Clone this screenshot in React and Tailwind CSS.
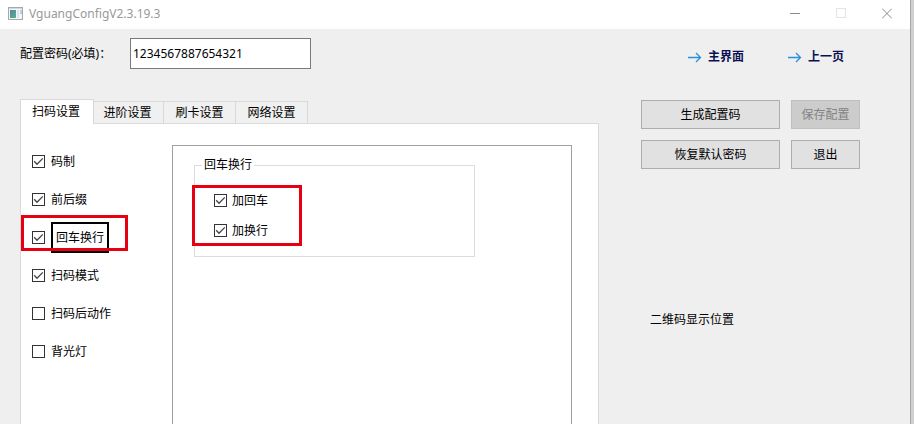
import React, { useState } from 'react';

const TABS = ['扫码设置', '进阶设置', '刷卡设置', '网络设置'];

const INITIAL_OPTIONS = [
  { id: 'symbology', label: '码制', checked: true },
  { id: 'affix', label: '前后缀', checked: true },
  { id: 'newline', label: '回车换行', checked: true, focused: true },
  { id: 'scanMode', label: '扫码模式', checked: true },
  { id: 'afterScan', label: '扫码后动作', checked: false },
  { id: 'backlight', label: '背光灯', checked: false },
];

const CheckBox = ({ id, checked, onChange }) => (
  <span className="grid size-[13px] shrink-0">
    <input
      id={id}
      type="checkbox"
      checked={checked}
      onChange={onChange}
      className="peer col-start-1 row-start-1 size-[13px] appearance-none border border-[#333333] bg-white outline-none"
    />
    <svg
      viewBox="0 0 13 13"
      className="pointer-events-none col-start-1 row-start-1 hidden size-[13px] peer-checked:block"
      fill="none"
      stroke="#444444"
      strokeWidth="1.3"
    >
      <path d="M2.2 6.3 L5 9.2 L10.8 3.4" />
    </svg>
  </span>
);

const TitleBar = () => (
  <header className="flex h-[29px] items-center bg-white pb-0.5 pl-2">
    <svg width="15" height="13" viewBox="0 0 15 13" className="mr-1.5 shrink-0">
      <defs>
        <linearGradient id="appIcon" x1="0" y1="0" x2="1" y2="1">
          <stop offset="0" stopColor="#4f86a8" />
          <stop offset="1" stopColor="#62b184" />
        </linearGradient>
      </defs>
      <rect x="0.5" y="0.5" width="14" height="12" fill="#f4f6f7" stroke="#a3a8aa" />
      <rect x="1" y="1" width="13" height="1" fill="#d3d8da" />
      <rect x="2" y="3" width="6" height="8" fill="url(#appIcon)" />
      <rect x="9" y="3" width="2" height="8" fill="#dde6ea" />
      <rect x="12" y="3" width="2" height="4" fill="#b9d2dc" />
    </svg>
    <h1 className="flex-1 text-[12px] leading-4 text-[#999999]">VguangConfigV2.3.19.3</h1>
    <button type="button" aria-label="最小化" className="flex h-full w-[45px] items-center justify-center">
      <svg width="11" height="11" viewBox="0 0 11 11" stroke="#8c8c8c">
        <path d="M0 5.5H10" />
      </svg>
    </button>
    <button type="button" aria-label="最大化" disabled className="flex h-full w-[46px] items-center justify-center">
      <svg width="10" height="11" viewBox="0 0 10 11" fill="none" stroke="#e4e4e4">
        <rect x="0.5" y="0.5" width="9" height="9" />
      </svg>
    </button>
    <button type="button" aria-label="关闭" className="flex h-full w-[46px] items-center justify-center">
      <svg width="10" height="11" viewBox="0 0 10 11" stroke="#8c8c8c">
        <path d="M0 0.5L10 10.5M10 0.5L0 10.5" />
      </svg>
    </button>
  </header>
);

const NavLink = ({ children }) => (
  <a href="#" className="flex items-center gap-1.5 text-[12px] leading-4 font-bold text-[#0b1052]">
    <svg width="15" height="12" viewBox="0 0 15 12" fill="none" stroke="#2b8fdc" strokeWidth="1.3">
      <path d="M1 6.5H13.5M9 2L13.5 6.5L9 11" />
    </svg>
    {children}
  </a>
);

const PushButton = ({ children, disabled }) => (
  <button
    type="button"
    disabled={disabled}
    className="h-[29px] border border-[#adadad] bg-[#e1e1e1] text-[12px] leading-4 text-black disabled:border-[#bfbfbf] disabled:bg-[#cccccc] disabled:text-[#838383]"
  >
    {children}
  </button>
);

const ScanSettings = () => {
  const [options, setOptions] = useState(INITIAL_OPTIONS);
  const [addCr, setAddCr] = useState(true);
  const [addLf, setAddLf] = useState(true);

  const toggle = (id) => {
    setOptions(options.map((o) => (o.id === id ? { ...o, checked: !o.checked } : o)));
  };

  return (
    <div role="tabpanel" className="flex flex-1 border border-b-0 border-[#d9d9d9] bg-white pr-[26px]">
      <ul className="w-[151px] shrink-0 pt-[18px]">
        {options.map((option) => (
          <li key={option.id} className="relative flex h-[38px] items-center gap-1.5 pl-[11px]">
            <CheckBox id={option.id} checked={option.checked} onChange={() => toggle(option.id)} />
            <label
              htmlFor={option.id}
              className={option.focused ? 'border-2 border-black px-[3px] py-1 leading-[19px]' : 'pt-0.5 leading-4'}
            >
              {option.label}
            </label>
            {option.focused && (
              <span className="pointer-events-none absolute -top-[3px] left-0 h-9 w-[107px] border-3 border-[#e60012]" />
            )}
          </li>
        ))}
      </ul>

      <div className="mt-[21px] flex-1 border border-b-0 border-[#a0a0a0] pt-3 pr-24 pl-[21px]">
        <fieldset className="border border-[#dcdcdc] pb-[11px]">
          <legend className="ml-[7px] px-0.5 leading-[14px]">回车换行</legend>
          <div className="relative mt-[13px] pl-[19px]">
            <div className="flex h-[30px] items-center gap-[5px]">
              <CheckBox id="addCr" checked={addCr} onChange={() => setAddCr(!addCr)} />
              <label htmlFor="addCr" className="pt-0.5 leading-4">加回车</label>
            </div>
            <div className="flex h-[30px] items-center gap-[5px]">
              <CheckBox id="addLf" checked={addLf} onChange={() => setAddLf(!addLf)} />
              <label htmlFor="addLf" className="pt-0.5 leading-4">加换行</label>
            </div>
            <span className="pointer-events-none absolute top-0 -left-[3px] h-[61px] w-[110px] border-3 border-[#e60012]" />
          </div>
        </fieldset>
      </div>
    </div>
  );
};

const App = () => {
  const [password, setPassword] = useState('1234567887654321');
  const [activeTab, setActiveTab] = useState(0);

  return (
    <div className="flex min-h-screen bg-[#d0d0d0] pr-[3px] font-['Noto_Sans','Noto_Sans_CJK_SC',sans-serif] text-[12px] leading-4 text-black">
      <div className="flex flex-1 flex-col border-r border-[#a6a6a6] bg-[#efefef]">
        <TitleBar />
        <main className="flex flex-1 gap-[42px] pr-[50px] pl-5">
          <section className="flex flex-1 flex-col pt-[9px]">
            <div className="flex items-center">
              <label htmlFor="password" className="w-[110px] shrink-0">配置密码(必填)：</label>
              <input
                id="password"
                type="text"
                value={password}
                onChange={(e) => setPassword(e.target.value)}
                className="h-[31px] w-[181px] border border-[#7a7a7a] bg-white px-0.5 outline-none"
              />
            </div>

            <div role="tablist" className="mt-[30px] -mb-px flex items-end">
              {TABS.map((tab, i) => (
                <button
                  key={tab}
                  type="button"
                  role="tab"
                  aria-selected={i === activeTab}
                  onClick={() => setActiveTab(i)}
                  className={
                    i === activeTab
                      ? 'z-10 -mr-0.5 h-[25px] w-[74px] border border-b-0 border-[#d9d9d9] bg-white pr-0.5'
                      : 'h-[23px] w-[72px] border border-l-0 border-[#d9d9d9] bg-[#f0f0f0] first:border-l'
                  }
                >
                  {tab}
                </button>
              ))}
            </div>
            <ScanSettings />
          </section>

          <aside className="w-[219px] shrink-0 pt-5">
            <nav className="flex gap-[43px] pl-[46px]">
              <NavLink>主界面</NavLink>
              <NavLink>上一页</NavLink>
            </nav>
            <div className="mt-[35px] grid grid-cols-[139px_69px] gap-[11px]">
              <PushButton>生成配置码</PushButton>
              <PushButton disabled>保存配置</PushButton>
              <PushButton>恢复默认密码</PushButton>
              <PushButton>退出</PushButton>
            </div>
            <p className="mt-[143px] pl-[9px]">二维码显示位置</p>
          </aside>
        </main>
      </div>
    </div>
  );
};

export default App;
